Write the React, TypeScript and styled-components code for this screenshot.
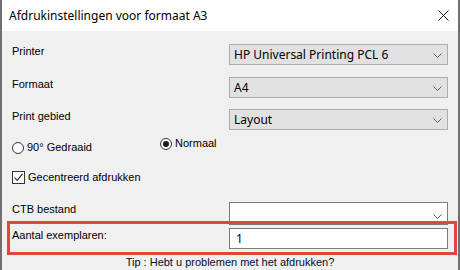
import React from "react";
import styled, { createGlobalStyle } from "styled-components";

const GlobalStyle = createGlobalStyle`
  html, body { margin: 0; padding: 0; background: #ffffff; }
  body { width: 460px; height: 270px; overflow: hidden; }
  * { box-sizing: border-box; }
`;

const Window = styled.div`
  position: relative;
  width: 460px;
  height: 270px;
  border-left: 2px solid #6f6f6f;
  border-right: 2px solid #6f6f6f;
  background: #f0f0f0;
  display: flex;
  flex-direction: column;
  font-family: "Liberation Sans", Arial, sans-serif;
  color: #000;
`;

const TitleBar = styled.div`
  height: 31px;
  flex: none;
  background: #ffffff;
  display: flex;
  align-items: center;
  justify-content: space-between;
  padding: 0 9px 0 7px;
`;

const Title = styled.span`
  font-family: "Noto Sans", "Open Sans", sans-serif;
  font-size: 12px;
  color: #000;
  padding-bottom: 1px;
`;

const CloseIcon = styled.svg`
  width: 11px;
  height: 11px;
  display: block;
`;

const Body = styled.div`
  flex: 1;
  display: flex;
  flex-direction: column;
  padding: 0 10px;
`;

const FieldRow = styled.div<{ $top: number; $h?: number }>`
  display: grid;
  grid-template-columns: 1fr 219px;
  margin-top: ${(p) => p.$top}px;
  height: ${(p) => p.$h ?? 21}px;
`;

const Label = styled.span<{ $pt?: number }>`
  font-size: 11px;
  line-height: 13px;
  padding-top: ${(p) => p.$pt ?? 0}px;
  white-space: nowrap;
`;

const Select = styled.div<{ $white?: boolean }>`
  position: relative;
  display: flex;
  align-items: center;
  height: 100%;
  padding: 0 0 1px 4px;
  background: ${(p) => (p.$white ? "#ffffff" : "#e1e1e1")};
  border: 1px solid ${(p) => (p.$white ? "#7a7a7a" : "#adadad")};
  font-family: "Noto Sans", "Open Sans", sans-serif;
  font-size: 12px;
`;

const Chevron = styled.svg<{ $dy?: number }>`
  position: absolute;
  right: 5px;
  top: 50%;
  margin-top: ${(p) => -2 + (p.$dy ?? 0)}px;
  width: 9px;
  height: 5px;
`;

const Input = styled.div`
  display: flex;
  align-items: center;
  height: 100%;
  padding: 0 0 1px 6px;
  background: #ffffff;
  border: 1px solid #7a7a7a;
  font-family: "Noto Sans", "Open Sans", sans-serif;
  font-size: 12px;
`;

const OptionRow = styled.div<{ $top: number }>`
  display: flex;
  align-items: flex-start;
  margin-top: ${(p) => p.$top}px;
  height: 14px;
`;

const Option = styled.label<{ $w?: number; $dy?: number }>`
  display: flex;
  align-items: center;
  gap: 3px;
  width: ${(p) => (p.$w ? `${p.$w}px` : "auto")};
  margin-top: ${(p) => p.$dy ?? 0}px;
  font-size: 11px;
  line-height: 13px;
  white-space: nowrap;
`;

const Radio = styled.span<{ $checked?: boolean }>`
  position: relative;
  width: 12px;
  height: 12px;
  border-radius: 50%;
  border: 1px solid #333333;
  background: #ffffff;
  flex: none;
  &::after {
    content: "";
    display: ${(p) => (p.$checked ? "block" : "none")};
    position: absolute;
    left: 2px;
    top: 2px;
    width: 6px;
    height: 6px;
    border-radius: 50%;
    background: #1a1a1a;
  }
`;

const Checkbox = styled.span`
  width: 13px;
  height: 13px;
  border: 1px solid #333333;
  background: #ffffff;
  flex: none;
  display: flex;
  align-items: center;
  justify-content: center;
`;

const Tip = styled.div`
  margin-top: 6px;
  text-align: center;
  font-size: 11px;
  line-height: 14px;
  color: #0a0a2a;
`;

const Highlight = styled.div`
  position: absolute;
  left: 5px;
  top: 221px;
  width: 450px;
  height: 34px;
  border: 3px solid #e3443f;
  pointer-events: none;
`;

const ChevronDown: React.FC<{ dy?: number }> = ({ dy }) => (
  <Chevron $dy={dy} viewBox="0 0 9 5">
    <path d="M0.5 0.5 L4.5 4.5 L8.5 0.5" fill="none" stroke="#606060" strokeWidth="1" />
  </Chevron>
);

const fields = [
  { label: "Printer", value: "HP Universal Printing PCL 6", top: 13 },
  { label: "Formaat", value: "A4", top: 12 },
  { label: "Print gebied", value: "Layout", top: 11 },
];

export default function App() {
  return (
    <>
      <GlobalStyle />
      <Window>
        <TitleBar>
          <Title>Afdrukinstellingen voor formaat A3</Title>
          <CloseIcon viewBox="0 0 11 11">
            <path d="M0.5 0.5 L10.5 10.5 M10.5 0.5 L0.5 10.5" stroke="#111" strokeWidth="1" />
          </CloseIcon>
        </TitleBar>
        <Body>
          {fields.map((f) => (
            <FieldRow key={f.label} $top={f.top}>
              <Label $pt={0.5}>{f.label}</Label>
              <Select>
                {f.value}
                <ChevronDown />
              </Select>
            </FieldRow>
          ))}
          <OptionRow $top={7}>
            <Option $w={148} $dy={4}>
              <Radio />
              90° Gedraaid
            </Option>
            <Option>
              <Radio $checked />
              Normaal
            </Option>
          </OptionRow>
          <OptionRow $top={20}>
            <Option>
              <Checkbox>
                <svg width="11" height="11" viewBox="0 0 11 11">
                  <path d="M1.5 5.5 L4.2 8.5 L9.5 1.8" fill="none" stroke="#222" strokeWidth="1.1" />
                </svg>
              </Checkbox>
              Gecentreerd afdrukken
            </Option>
          </OptionRow>
          <FieldRow $top={17} $h={23}>
            <Label $pt={0.5}>CTB bestand</Label>
            <Select $white>
              <ChevronDown dy={2} />
            </Select>
          </FieldRow>
          <FieldRow $top={3}>
            <Label $pt={0.5}>Aantal exemplaren:</Label>
            <Input>1</Input>
          </FieldRow>
          <Tip>Tip : Hebt u problemen met het afdrukken?</Tip>
        </Body>
        <Highlight />
      </Window>
    </>
  );
}
